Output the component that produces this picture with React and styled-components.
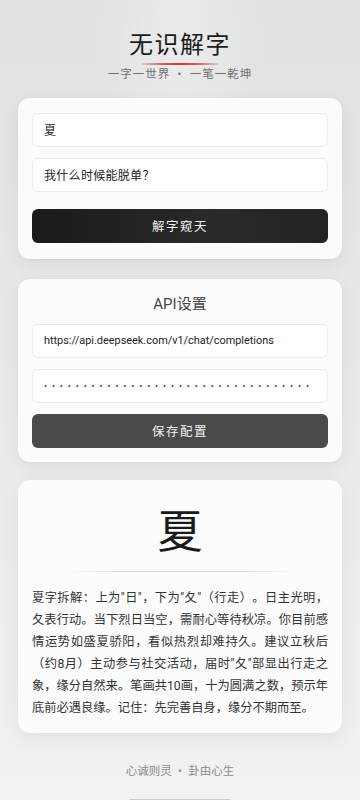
import React, { useState } from 'react';
import styled, { createGlobalStyle } from 'styled-components';

//#region STYLES
const GlobalStyle = createGlobalStyle`
    * { box-sizing: border-box; }
    html, body {
        margin: 0;
        padding: 0;
    }
    body {
        font-family: Roboto, "Noto Sans CJK SC", sans-serif;
        background: linear-gradient(180deg, #e1e1e1 0%, #e9e9e9 45%, #f2f2f2 100%);
        min-height: 100vh;
        text-spacing-trim: space-all;
    }
`;

const Page = styled.main`
    display: flex;
    flex-direction: column;
    align-items: stretch;
    padding: 27px 18px 0;
    background: radial-gradient(ellipse 90px 220px at 50% 0%, rgba(255,255,255,.35), rgba(255,255,255,0));
`;

const Header = styled.header`
    display: flex;
    flex-direction: column;
    align-items: center;
    margin-bottom: 17px;
`;

const Title = styled.h1`
    margin: 0;
    font-family: "Noto Sans CJK SC", sans-serif;
    font-weight: 400;
    font-size: 24px;
    line-height: 32px;
    letter-spacing: 1.5px;
    color: #1c1c1c;
`;

const Accent = styled.div`
    width: 76px;
    height: 1.5px;
    margin-top: 4px;
    background: linear-gradient(90deg, rgba(150,150,150,.3) 0%, #d4665c 25%, #c43a30 50%, #d4665c 75%, rgba(150,150,150,.3) 100%);
`;

const Subtitle = styled.p`
    margin: 0;
    font-family: "Noto Sans CJK SC", sans-serif;
    font-size: 11.5px;
    line-height: 16px;
    letter-spacing: 1px;
    color: #707070;
`;

const Card = styled.section`
    display: flex;
    flex-direction: column;
    background: #fcfcfc;
    border-radius: 12px;
    box-shadow: 0 6px 22px rgba(0,0,0,.06), 0 1px 3px rgba(0,0,0,.03);
    padding: ${props => props.pad};
    margin-bottom: ${props => props.after || '0'};
`;

const CardTitle = styled.h2`
    margin: 0 0 10px;
    text-align: center;
    font-weight: 400;
    font-size: 15px;
    line-height: 20px;
    color: #464646;
`;

const Field = styled.input`
    display: block;
    width: 100%;
    height: 34px;
    padding: 0 11px;
    margin-bottom: ${props => props.gap || '11px'};
    border: 1px solid #ececec;
    border-radius: 6px;
    background: #fff;
    outline: none;
    font-family: Roboto, "Noto Sans CJK SC", sans-serif;
    font-size: ${props => props.type === 'password' ? '9px' : props.small ? '10.9px' : '12px'};
    letter-spacing: ${props => props.type === 'password' ? '4.9px' : props.small ? '0' : '.3px'};
    color: ${props => props.type === 'password' ? '#444' : '#222'};
`;

const Button = styled.button`
    display: block;
    width: 100%;
    height: 34px;
    border: none;
    border-radius: 6px;
    background: ${props => props.dark
        ? 'linear-gradient(90deg, #1a1a1a 0%, #2a2a2a 60%, #232323 100%)'
        : '#4a4a4a'};
    color: #f2f2f2;
    font-family: "Noto Sans CJK SC", sans-serif;
    font-size: 12.5px;
    letter-spacing: 1.5px;
    cursor: pointer;
`;

const BigChar = styled.div`
    text-align: center;
    font-family: "Noto Sans CJK SC", sans-serif;
    font-size: 45px;
    line-height: 52px;
    color: #1a1a1a;
`;

const Divider = styled.div`
    width: 225px;
    height: 1px;
    margin: 16px auto 15px;
    background: linear-gradient(90deg, rgba(215,215,215,0), #dcdcdc 20%, #dcdcdc 80%, rgba(215,215,215,0));
`;

const Reading = styled.p`
    margin: 0;
    font-family: Roboto, "Noto Sans CJK SC", sans-serif;
    font-size: 12.25px;
    line-height: 22px;
    text-align: justify;
    text-spacing-trim: space-all;
    color: #333;
`;

const Footer = styled.footer`
    display: flex;
    flex-direction: column;
    align-items: center;
    margin-top: 29px;
`;

const Motto = styled.p`
    margin: 0;
    font-family: "Noto Sans CJK SC", sans-serif;
    font-size: 11.5px;
    line-height: 16px;
    color: #8a8a8a;
`;

const Bar = styled.div`
    width: 100px;
    height: 2px;
    margin-top: 21px;
    background: #c9c9c9;
`;
//#endregion

const READING = '夏字拆解：上为"日"，下为"夂"（行走）。日主光明，夂表行动。当下烈日当空，需耐心等待秋凉。你目前感情运势如盛夏骄阳，看似热烈却难持久。建议立秋后（约8月）主动参与社交活动，届时"夂"部显出行走之象，缘分自然来。笔画共10画，十为圆满之数，预示年底前必遇良缘。记住：先完善自身，缘分不期而至。';

function App () {
    const [char, setChar] = useState('夏');
    const [question, setQuestion] = useState('我什么时候能脱单？');
    const [apiUrl, setApiUrl] = useState('https://api.deepseek.com/v1/chat/completions');
    const [apiKey, setApiKey] = useState('sk-0000000000000000000000000000000');

    return (
        <>
            <GlobalStyle />
            <Page>
                <Header>
                    <Title>无识解字</Title>
                    <Accent />
                    <Subtitle>一字一世界 · 一笔一乾坤</Subtitle>
                </Header>

                <Card pad='15px 14px 16px' after='20px'>
                    <Field value={char} onChange={e => setChar(e.target.value)} />
                    <Field gap='17px' value={question} onChange={e => setQuestion(e.target.value)} />
                    <Button dark>解字窥天</Button>
                </Card>

                <Card pad='15px 14px 14px' after='18px'>
                    <CardTitle>API设置</CardTitle>
                    <Field small value={apiUrl} onChange={e => setApiUrl(e.target.value)} />
                    <Field type='password' value={apiKey} onChange={e => setApiKey(e.target.value)} />
                    <Button>保存配置</Button>
                </Card>

                <Card pad='23px 14px 14px'>
                    <BigChar>{char}</BigChar>
                    <Divider />
                    <Reading>{READING}</Reading>
                </Card>

                <Footer>
                    <Motto>心诚则灵 · 卦由心生</Motto>
                    <Bar />
                </Footer>
            </Page>
        </>
    );
}

export default App;
